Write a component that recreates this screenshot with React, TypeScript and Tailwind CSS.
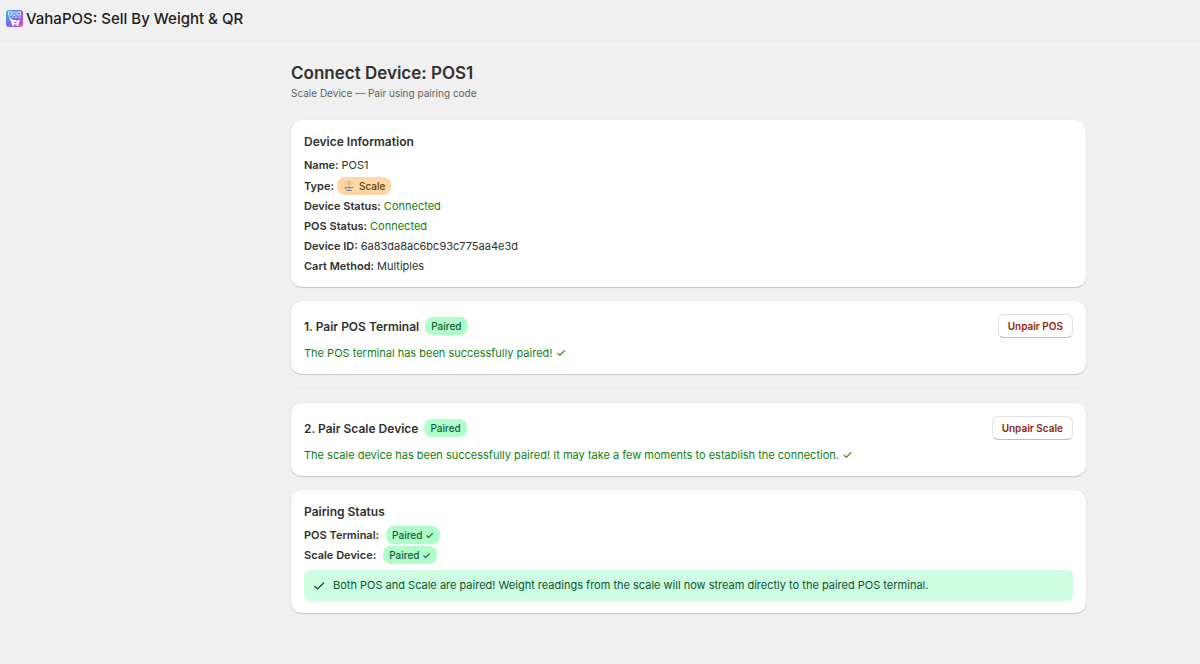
import type { ReactNode } from "react";

export default function App() {
  return (
    <div className="min-h-screen bg-[#f0f0f0] font-['Inter',sans-serif] text-[11px] leading-[17px] text-[#303030]">
      {/* Top bar */}
      <header className="flex h-[41px] items-center gap-[3px] border-b border-[#ebebeb] px-1.5 pb-1">
        <AppLogo />
        <span className="text-[15px] font-medium text-[#202020]">
          VahaPOS: Sell By Weight &amp; QR
        </span>
      </header>

      <main className="pt-[22px] pb-12 md:pl-[177px]">
        <div className="mx-auto max-w-[795px]">
          <h1 className="text-[17px] leading-5 font-semibold">
            Connect Device: POS1
          </h1>
          <p className="mb-4 text-[10px] leading-[21px] text-[#616161]">
            Scale Device — Pair using pairing code
          </p>

          <div className="flex flex-col gap-3.5">
            {/* Device Information */}
            <Card>
              <h2 className="text-[12px] font-semibold">Device Information</h2>
              <div className="flex flex-col gap-[3px] pt-[7px]">
                <Row label="Name:">POS1</Row>
                <Row label="Type:">
                  <span className="flex h-[18px] items-center gap-1 rounded-lg bg-[#ffd6a4] px-1.5 text-[10px] font-medium text-[#5e4200]">
                    <ScaleIcon />
                    Scale
                  </span>
                </Row>
                <Row label="Device Status:">
                  <span className="text-[#108010]">Connected</span>
                </Row>
                <Row label="POS Status:">
                  <span className="text-[#108010]">Connected</span>
                </Row>
                <Row label="Device ID:">6a83da8ac6bc93c775aa4e3d</Row>
                <Row label="Cart Method:">Multiples</Row>
              </div>
            </Card>

            <PairCard
              title="1. Pair POS Terminal"
              action="Unpair POS"
              message="The POS terminal has been successfully paired!"
            />
            <hr className="border-[#ebebeb]" />
            <PairCard
              title="2. Pair Scale Device"
              action="Unpair Scale"
              message="The scale device has been successfully paired! It may take a few moments to establish the connection."
            />

            {/* Pairing Status */}
            <Card>
              <h2 className="text-[12px] font-semibold">Pairing Status</h2>
              <div className="flex flex-col gap-0.5 py-1.5">
                <div className="flex items-center gap-[7px]">
                  <strong className="font-semibold">POS Terminal:</strong>
                  <Badge>Paired ✓</Badge>
                </div>
                <div className="flex items-center gap-[7px]">
                  <strong className="font-semibold">Scale Device:</strong>
                  <Badge>Paired ✓</Badge>
                </div>
              </div>
              <div className="flex min-h-[31px] items-center gap-2 rounded-md bg-[#cdfee1] px-[9px] text-[#0c5132]">
                <svg
                  viewBox="0 0 12 12"
                  className="size-3 shrink-0"
                  fill="none"
                  stroke="currentColor"
                  strokeWidth="1.2"
                  strokeLinecap="round"
                  strokeLinejoin="round"
                >
                  <path d="M1.7 6.3 4.5 9 10.5 3" />
                </svg>
                <p>
                  Both POS and Scale are paired! Weight readings from the scale
                  will now stream directly to the paired POS terminal.
                </p>
              </div>
            </Card>
          </div>
        </div>
      </main>
    </div>
  );
}

function Card({ children }: { children: ReactNode }) {
  return (
    <section className="rounded-[10px] bg-white px-[13px] pt-[13px] pb-3 shadow-[0_1px_1px_#00000028,0_0_1px_#00000030]">
      {children}
    </section>
  );
}

function Row({ label, children }: { label: string; children: ReactNode }) {
  return (
    <div className="flex items-center gap-[3px]">
      <strong className="font-semibold">{label}</strong>
      {children}
    </div>
  );
}

function Badge({ children }: { children: ReactNode }) {
  return (
    <span className="flex h-[18px] items-center rounded-lg bg-[#affec9] px-1.5 text-[10px] font-medium text-[#125a38]">
      {children}
    </span>
  );
}

function PairCard({
  title,
  action,
  message,
}: {
  title: string;
  action: string;
  message: string;
}) {
  return (
    <Card>
      <div className="flex items-center gap-1.5">
        <h2 className="text-[12px] font-semibold">{title}</h2>
        <Badge>Paired</Badge>
        <button
          type="button"
          className="ml-auto h-6 rounded-md border border-[#e3e3e3] border-b-[#bdbdbd] bg-white px-[9px] text-[10px] font-semibold text-[#8e1f0b]"
        >
          {action}
        </button>
      </div>
      <p className="pt-[7px] text-[#108010]">
        {message} <span className="text-[12px] leading-none">✓</span>
      </p>
    </Card>
  );
}

function AppLogo() {
  return (
    <svg viewBox="0 0 34 34" className="size-[17px] shrink-0">
      <defs>
        <linearGradient id="logo" x1="0" y1="0" x2="1" y2="1">
          <stop offset="0" stopColor="#35b5f2" />
          <stop offset="0.5" stopColor="#7b6ce8" />
          <stop offset="1" stopColor="#e64bc0" />
        </linearGradient>
      </defs>
      <rect width="34" height="34" rx="6" fill="url(#logo)" />
      <g fill="none" stroke="#d5efff" strokeWidth="2">
        <rect x="5" y="4" width="7" height="6" />
        <rect x="22" y="4" width="7" height="6" />
      </g>
      <path
        d="M15 3h4v4h-4zM14 9h5v3h-5zM5 13h4v3H5zM12 13h3v3h-3zM18 13h4v3h-4zM25 13h4v3h-4z"
        fill="#b9dcff"
      />
      <path d="M7 17h4l2 3h6l2 2 3-2h4l-3 9H12L9 20H7z" fill="#fff" />
      <path d="M16 24h5v2h-5z" fill="#9a5fe0" />
      <circle cx="14" cy="30" r="2" fill="#fff" />
      <circle cx="23" cy="30" r="2" fill="#fff" />
    </svg>
  );
}

function ScaleIcon() {
  return (
    <svg viewBox="0 0 24 24" className="size-3 shrink-0" fill="none">
      <path d="M12 2v18" stroke="#a3958a" strokeWidth="1.8" />
      <path d="M5 4h14" stroke="#d3b894" strokeWidth="1.4" />
      <path
        d="M5 4 2 12M5 4l3 8M19 4l-3 8M19 4l3 8"
        stroke="#e5c497"
        strokeWidth="1"
      />
      <path
        d="M2 14h20c-2 4-7 3-10 2-3 1-8 2-10-2z"
        fill="#8796a5"
      />
      <path d="M6 20h12v2H6z" fill="#77777c" />
    </svg>
  );
}
